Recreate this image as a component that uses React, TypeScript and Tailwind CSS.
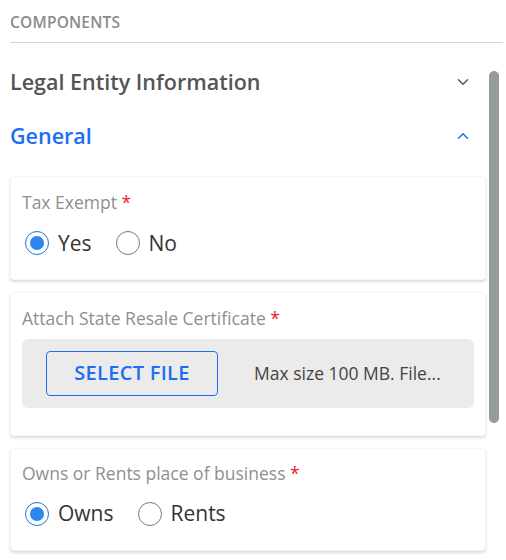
import React, { useState } from 'react';
import { ChevronDown, ChevronUp } from 'lucide-react';

const Radio = ({ checked, label, onClick }: { checked: boolean; label: string; onClick: () => void }) => (
  <button onClick={onClick} className="flex items-center gap-[9px] text-[21px] text-[#333]">
    <span className={`w-[24px] h-[24px] rounded-full border flex items-center justify-center ${checked ? 'border-[#1a73e8]' : 'border-[#777]'}`}>
      {checked && <span className="w-[14px] h-[14px] rounded-full bg-[#2f86ee]" />}
    </span>
    {label}
  </button>
);

const Label = ({ text }: { text: string }) => (
  <div className="text-[17.5px] text-[#8f8f8f] leading-none">
    {text} <span className="text-[#e5252a]">*</span>
  </div>
);

const Card = ({ children, className = '' }: { children: React.ReactNode; className?: string }) => (
  <div className={`bg-white rounded-[4px] shadow-[0_2px_3px_rgba(0,0,0,0.14)] border border-[#f6f6f6] px-[11px] ${className}`}>
    {children}
  </div>
);

export default function App() {
  const [tax, setTax] = useState('Yes');
  const [own, setOwn] = useState('Owns');
  return (
    <div className="w-[506px] h-[560px] bg-white overflow-hidden pl-[10px] pr-[3px]" style={{ fontFamily: '"Open Sans", sans-serif' }}>
      <div className="pt-[12px] pb-[10px] text-[15.5px] font-semibold text-[#8c8c8c] tracking-[0.2px] leading-[20px]">COMPONENTS</div>
      <div className="h-[1px] bg-[#d6d6d6]" />
      <div className="flex">
        <div className="w-[476px]">
          <div className="flex items-center justify-between h-[54px] mt-[12px] pr-[14px]">
            <span className="text-[21.5px] font-semibold text-[#555]">Legal Entity Information</span>
            <ChevronDown size={18} className="text-[#555]" />
          </div>
          <div className="flex items-center justify-between h-[54px] pr-[14px]">
            <span className="text-[21.5px] font-semibold text-[#1a6ef5]">General</span>
            <ChevronUp size={18} className="text-[#1a6ef5]" />
          </div>
          <div className="flex flex-col gap-[12px] mt-[13px]">
            <Card className="pt-[17px] pb-[20px]">
              <Label text="Tax Exempt" />
              <div className="flex gap-[24px] mt-[16px] pl-[3px]">
                <Radio checked={tax === 'Yes'} label="Yes" onClick={() => setTax('Yes')} />
                <Radio checked={tax === 'No'} label="No" onClick={() => setTax('No')} />
              </div>
            </Card>
            <Card className="pt-[17px] pb-[27px]">
              <Label text="Attach State Resale Certificate" />
              <div className="mt-[11px] h-[69px] bg-[#ebebeb] rounded-[6px] flex items-center pl-[24px]">
                <button className="w-[172px] h-[45px] border border-[#1a6ef5] rounded-[4px] text-[20px] font-semibold text-[#1a6ef5] tracking-[0.3px]">SELECT FILE</button>
                <span className="ml-[36px] text-[17.5px] text-[#444]">Max size 100 MB. File...</span>
              </div>
            </Card>
            <Card className="pt-[16px] pb-[20px]">
              <Label text="Owns or Rents place of business" />
              <div className="flex gap-[24px] mt-[16px] pl-[3px]">
                <Radio checked={own === 'Owns'} label="Owns" onClick={() => setOwn('Owns')} />
                <Radio checked={own === 'Rents'} label="Rents" onClick={() => setOwn('Rents')} />
              </div>
            </Card>
          </div>
        </div>
        <div className="ml-[3px] mt-[28px] w-[10px] h-[352px] rounded-full bg-[#959a9a]" />
      </div>
    </div>
  );
}
